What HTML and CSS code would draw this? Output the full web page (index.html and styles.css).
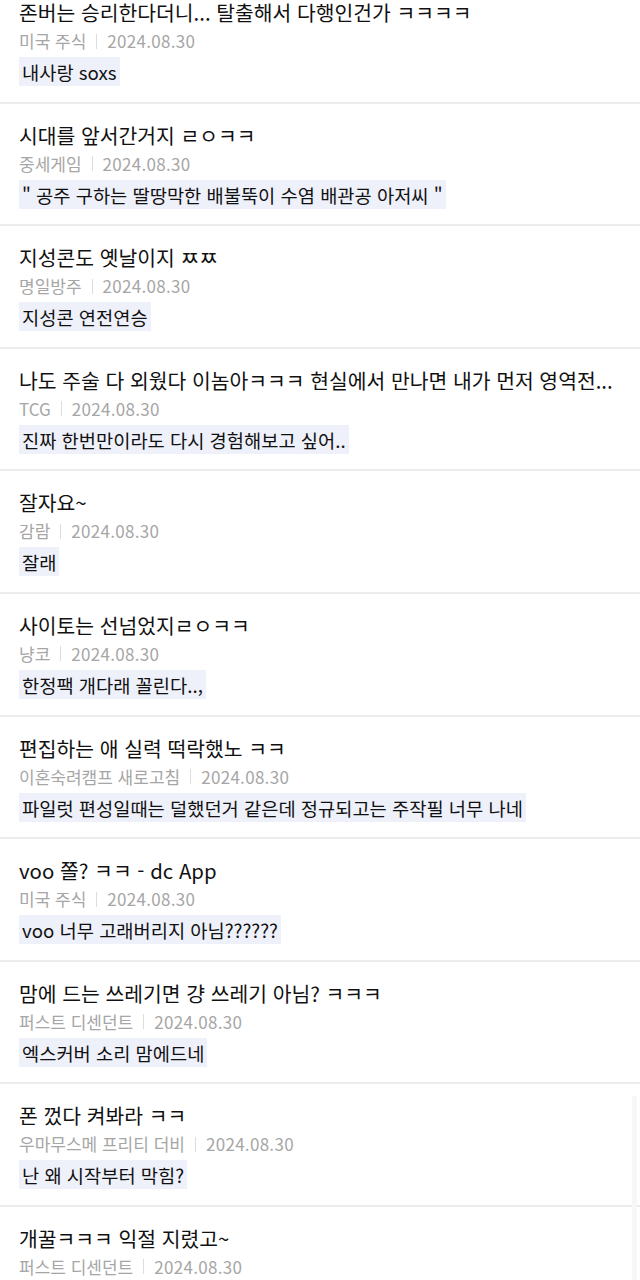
FILE: index.html
```html
<!DOCTYPE html>
<html lang="ko">
<head>
    <meta charset="UTF-8">
    <meta name="viewport" content="width=device-width, initial-scale=1.0">
    <title>댓글 목록</title>
    <link rel="stylesheet" href="styles.css">
</head>
<body>
    <ul class="list">
        <li class="item">
            <div class="title">존버는 승리한다더니... 탈출해서 다행인건가 ㅋㅋㅋㅋ</div>
            <div class="meta"><span>미국 주식</span><i class="bar"></i><span class="date">2024.08.30</span></div>
            <div class="comment"><span>내사랑 soxs</span></div>
        </li>
        <li class="item">
            <div class="title">시대를 앞서간거지 ㄹㅇㅋㅋ</div>
            <div class="meta"><span>중세게임</span><i class="bar"></i><span class="date">2024.08.30</span></div>
            <div class="comment"><span>" 공주 구하는 딸땅막한 배불뚝이 수염 배관공 아저씨 "</span></div>
        </li>
        <li class="item">
            <div class="title">지성콘도 옛날이지 ㅉㅉ</div>
            <div class="meta"><span>명일방주</span><i class="bar"></i><span class="date">2024.08.30</span></div>
            <div class="comment"><span>지성콘 연전연승</span></div>
        </li>
        <li class="item">
            <div class="title">나도 주술 다 외웠다 이놈아ㅋㅋㅋ 현실에서 만나면 내가 먼저 영역전...</div>
            <div class="meta"><span>TCG</span><i class="bar"></i><span class="date">2024.08.30</span></div>
            <div class="comment"><span>진짜 한번만이라도 다시 경험해보고 싶어..</span></div>
        </li>
        <li class="item">
            <div class="title">잘자요~</div>
            <div class="meta"><span>감람</span><i class="bar"></i><span class="date">2024.08.30</span></div>
            <div class="comment"><span>잘래</span></div>
        </li>
        <li class="item">
            <div class="title">사이토는 선넘었지ㄹㅇㅋㅋ</div>
            <div class="meta"><span>냥코</span><i class="bar"></i><span class="date">2024.08.30</span></div>
            <div class="comment"><span>한정팩 개다래 꼴린다..,</span></div>
        </li>
        <li class="item">
            <div class="title">편집하는 애 실력 떡락했노 ㅋㅋ</div>
            <div class="meta"><span>이혼숙려캠프 새로고침</span><i class="bar"></i><span class="date">2024.08.30</span></div>
            <div class="comment"><span>파일럿 편성일때는 덜했던거 같은데 정규되고는 주작필 너무 나네</span></div>
        </li>
        <li class="item">
            <div class="title">voo 쫄? ㅋㅋ - dc App</div>
            <div class="meta"><span>미국 주식</span><i class="bar"></i><span class="date">2024.08.30</span></div>
            <div class="comment"><span>voo 너무 고래버리지 아님??????</span></div>
        </li>
        <li class="item">
            <div class="title">맘에 드는 쓰레기면 걍 쓰레기 아님? ㅋㅋㅋ</div>
            <div class="meta"><span>퍼스트 디센던트</span><i class="bar"></i><span class="date">2024.08.30</span></div>
            <div class="comment"><span>엑스커버 소리 맘에드네</span></div>
        </li>
        <li class="item">
            <div class="title">폰 껐다 켜봐라 ㅋㅋ</div>
            <div class="meta"><span>우마무스메 프리티 더비</span><i class="bar"></i><span class="date">2024.08.30</span></div>
            <div class="comment"><span>난 왜 시작부터 막힘?</span></div>
        </li>
        <li class="item">
            <div class="title">개꿀ㅋㅋㅋ 익절 지렸고~</div>
            <div class="meta"><span>퍼스트 디센던트</span><i class="bar"></i><span class="date">2024.08.30</span></div>
            <div class="comment"><span>ㅊㅊ</span></div>
        </li>
    </ul>
    <div class="scrollbar"></div>
</body>
</html>
```

FILE: styles.css
```css
body {
    position: relative;
    margin: 0;
    background-color: #fff;
    color: #111;
    font-family: "Noto Sans CJK KR", "Noto Sans", sans-serif;
    overflow: hidden;
}

.list {
    list-style: none;
    margin: -19px 0 0;
    padding: 0;
}

.item {
    padding: 17px 0 15.6px 19px;
    border-bottom: 2px solid #ececec;
}

.title {
    font-size: 20.4px;
    line-height: 28px;
    white-space: nowrap;
    overflow: hidden;
}

.meta {
    display: flex;
    align-items: center;
    margin-top: 3px;
    font-size: 17px;
    line-height: 24px;
    color: #a6a6a6;
}

.date {
    letter-spacing: 0.3px;
}

.bar {
    display: inline-block;
    width: 1px;
    height: 15px;
    margin: 0 10px;
    background-color: #ddd;
}

.comment {
    margin-top: 4px;
    font-size: 18.7px;
    line-height: 29px;
}

.comment span {
    display: inline-block;
    padding: 0 3px;
    background-color: #eef0fa;
}

/* faint scroll indicator on the right edge */
.scrollbar {
    position: absolute;
    top: 1096px;
    right: 3px;
    width: 5px;
    height: 190px;
    background-color: #f7f7f7;
}
```
